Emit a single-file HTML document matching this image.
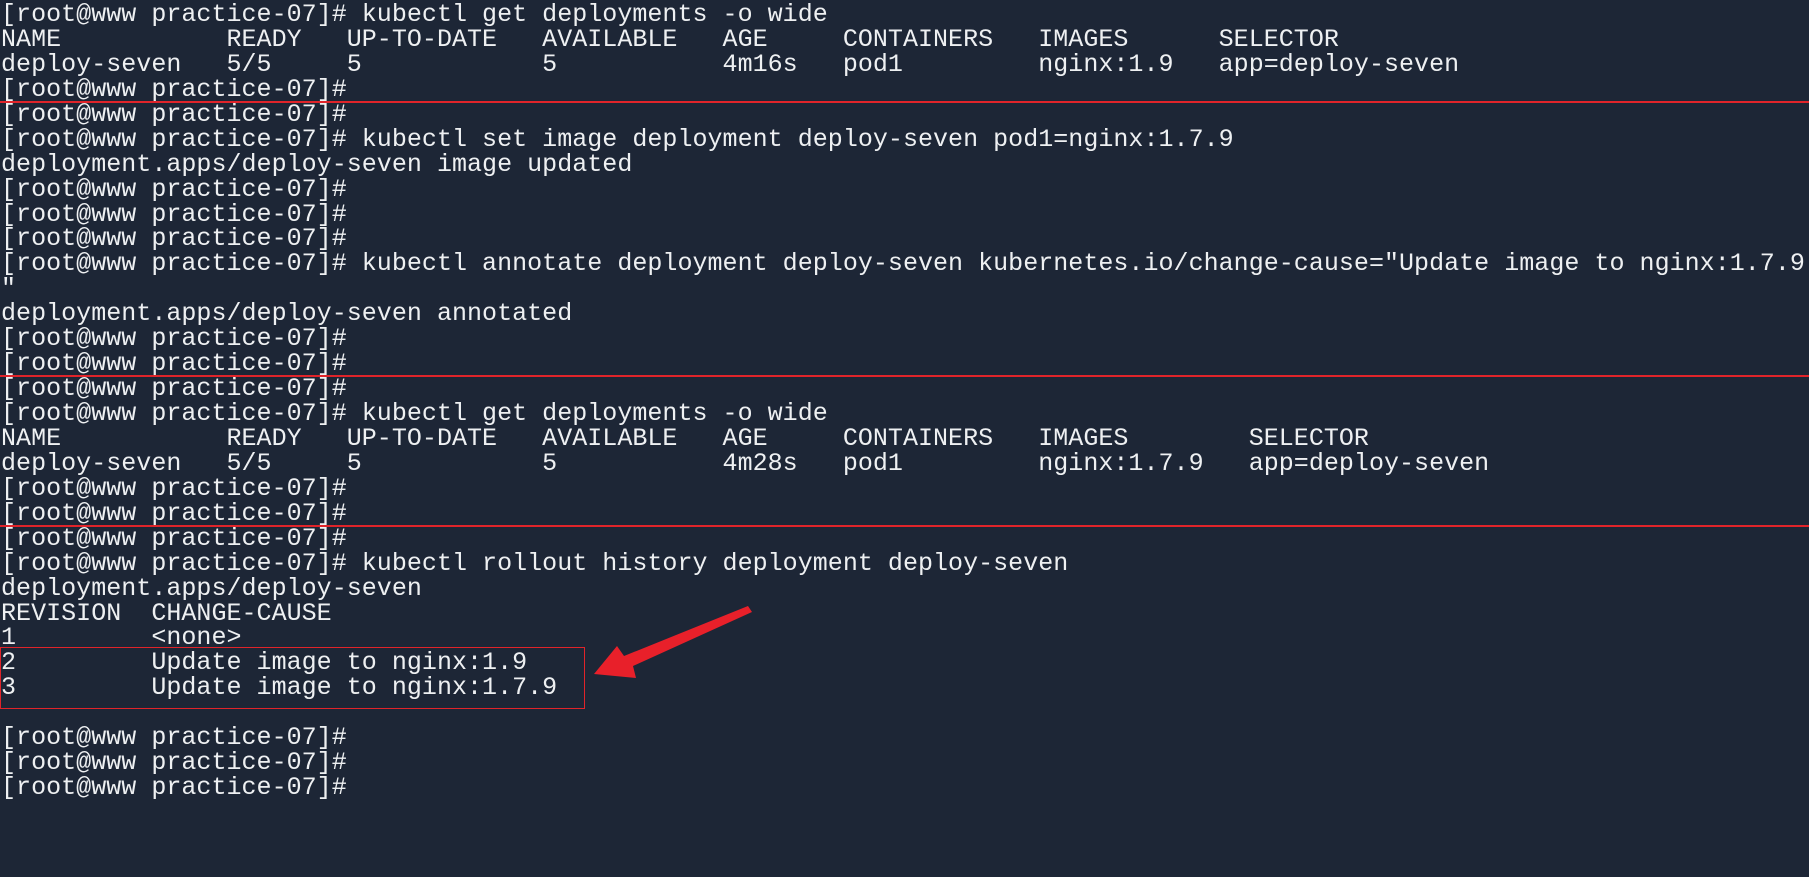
<!DOCTYPE html>
<html><head><meta charset="utf-8"><style>
html,body{margin:0;padding:0;background:#1d2636;width:1809px;height:877px;overflow:hidden}
pre{position:absolute;left:1px;top:3px;margin:0;font-family:"Liberation Mono",monospace;font-size:25px;line-height:24.93px;color:#eef0f2;letter-spacing:0.03px}
.hl{position:absolute;left:0;width:1809px;height:2px;background:#e0242a}
</style></head><body>
<pre>[root@www practice-07]# kubectl get deployments -o wide
NAME           READY   UP-TO-DATE   AVAILABLE   AGE     CONTAINERS   IMAGES      SELECTOR
deploy-seven   5/5     5            5           4m16s   pod1         nginx:1.9   app=deploy-seven
[root@www practice-07]#
[root@www practice-07]#
[root@www practice-07]# kubectl set image deployment deploy-seven pod1=nginx:1.7.9
deployment.apps/deploy-seven image updated
[root@www practice-07]#
[root@www practice-07]#
[root@www practice-07]#
[root@www practice-07]# kubectl annotate deployment deploy-seven kubernetes.io/change-cause="Update image to nginx:1.7.9
"
deployment.apps/deploy-seven annotated
[root@www practice-07]#
[root@www practice-07]#
[root@www practice-07]#
[root@www practice-07]# kubectl get deployments -o wide
NAME           READY   UP-TO-DATE   AVAILABLE   AGE     CONTAINERS   IMAGES        SELECTOR
deploy-seven   5/5     5            5           4m28s   pod1         nginx:1.7.9   app=deploy-seven
[root@www practice-07]#
[root@www practice-07]#
[root@www practice-07]#
[root@www practice-07]# kubectl rollout history deployment deploy-seven
deployment.apps/deploy-seven
REVISION  CHANGE-CAUSE
1         &lt;none&gt;
2         Update image to nginx:1.9
3         Update image to nginx:1.7.9

[root@www practice-07]#
[root@www practice-07]#
[root@www practice-07]#</pre>
<div class="hl" style="top:101px"></div>
<div class="hl" style="top:375px"></div>
<div class="hl" style="top:525px"></div>
<div style="position:absolute;left:0;top:647px;width:583px;height:60px;border:1.5px solid #e0242a"></div>
<svg style="position:absolute;left:0;top:0" width="1809" height="877">
<polygon points="748,606 752,612 633,666 636,678 594,674 617,646 624,656" fill="#e8202a"/>
</svg>
</body></html>
